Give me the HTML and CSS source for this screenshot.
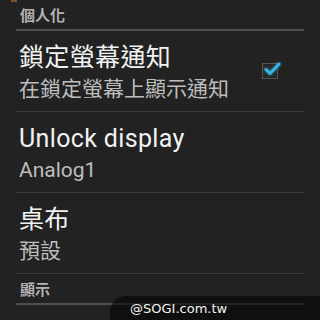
FILE: index.html
```html
<!DOCTYPE html>
<html>
<head>
<meta charset="utf-8">
<link rel="stylesheet" href="styles.css">
</head>
<body>
<div class="speck"></div>
<div class="screen">
  <div class="cat">個人化</div>
  <div class="row">
    <div class="texts">
      <div class="title">鎖定螢幕通知</div>
      <div class="summary">在鎖定螢幕上顯示通知</div>
    </div>
    <div class="checkbox">
      <svg width="22" height="20" viewBox="0 0 22 20">
        <path d="M5 10.5 L9 14.5 L18 5" fill="none" stroke="#33b5e5" stroke-width="3" stroke-linecap="round" stroke-linejoin="round" class="glow"/>
      </svg>
    </div>
  </div>
  <div class="row">
    <div class="texts">
      <div class="title">Unlock display</div>
      <div class="summary">Analog1</div>
    </div>
  </div>
  <div class="row">
    <div class="texts">
      <div class="title">桌布</div>
      <div class="summary">預設</div>
    </div>
  </div>
  <div class="cat">顯示</div>
</div>
<div class="watermark">@SOGI.com.tw</div>
</body>
</html>
```

FILE: styles.css
```css
html, body {
  margin: 0;
  padding: 0;
  background: #222222;
  width: 320px;
  height: 320px;
  overflow: hidden;
  font-family: Roboto, "Noto Sans CJK TC", sans-serif;
}
.screen {
  display: flex;
  flex-direction: column;
  padding: 0 16px;
}
.cat {
  box-sizing: border-box;
  height: 31px;
  padding: 8px 0 0 4px;
  font-size: 15px;
  line-height: 17px;
  font-weight: bold;
  color: #b4b4b4;
  border-bottom: 2px solid #4e4e4e;
}
.row {
  height: 81px;
  box-sizing: border-box;
  border-bottom: 1px solid #3a3a3a;
  display: flex;
  align-items: flex-start;
  justify-content: space-between;
  padding: 13px 26px 0 3px;
}
.texts {
  display: flex;
  flex-direction: column;
  gap: 5px;
}
.title {
  font-size: 25px;
  line-height: 28px;
  letter-spacing: 0.35px;
  color: #f2f2f2;
}
.summary {
  font-size: 21px;
  line-height: 24px;
  color: #bdbdbd;
}
.checkbox {
  align-self: center;
  margin-top: -13px;
  width: 14px;
  height: 14px;
  border: 1.5px solid #555;
  background: #262626;
  position: relative;
}
.checkbox svg {
  position: absolute;
  left: -2px;
  top: -5px;
  overflow: visible;
}
.glow {
  filter: drop-shadow(0 0 1.5px rgba(51, 181, 229, 0.8));
}
.watermark {
  position: absolute;
  right: 0;
  bottom: 0;
  width: 190px;
  height: 24px;
  padding-left: 20px;
  background: rgba(0, 0, 0, 0.55);
  border-top-left-radius: 16px;
  color: #f4f4f4;
  font-family: "DejaVu Sans", sans-serif;
  font-size: 13px;
  line-height: 26px;
}
.speck {
  position: absolute;
  left: 11px;
  top: 0;
  width: 6px;
  height: 2px;
  background: #7a5228;
}
```
